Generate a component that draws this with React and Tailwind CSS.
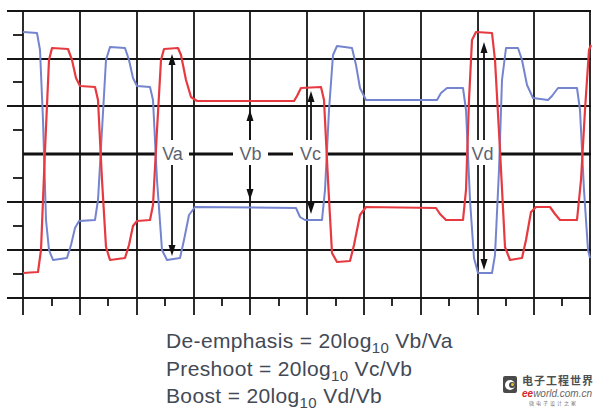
import React from 'react';

const FONT = { fontFamily: '"Liberation Sans", Arial, sans-serif' };
const CJK = { fontFamily: '"Noto Sans CJK SC", sans-serif' };

const RED = [
  [23,273],[38,272],[41,250],[45,150],[49,60],[52,48],[68,49],[72,60],[76,78],[80,86],[95,87],
  [98,100],[102,180],[106,247],[110,260],[125,258],[129,245],[133,226],[137,221],[150,220],
  [153,205],[157,130],[161,60],[164,49],[178,48],[181,55],[186,80],[191,97],[197,101],[294,101],
  [297,96],[301,88],[321,87],[324,100],[328,180],[332,253],[337,262],[350,261],[354,245],[360,215],
  [366,207],[436,208],[440,214],[446,220],[463,220],[466,190],[469,100],[472,40],[476,32],[492,33],
  [495,60],[500,150],[505,247],[510,260],[522,258],[526,240],[531,212],[536,207],[550,207],[555,214],
  [560,220],[577,220],[581,180],[585,110],[589,50],[591,45],
];

const BLUE = [
  [23,32],[37,33],[40,50],[43,120],[46,220],[49,250],[53,260],[67,258],[71,245],[75,228],[79,221],
  [95,220],[98,200],[102,130],[106,60],[110,47],[125,48],[129,60],[133,78],[137,86],[150,87],
  [153,100],[157,180],[162,250],[167,260],[180,258],[184,240],[189,215],[195,207],[296,208],
  [300,217],[305,220],[322,220],[325,190],[329,110],[333,55],[337,46],[352,48],[356,65],[360,88],
  [366,100],[437,100],[441,93],[447,88],[463,88],[466,110],[470,200],[474,258],[478,273],[492,273],
  [495,255],[499,170],[502,80],[506,48],[518,48],[522,60],[527,85],[533,98],[548,100],[552,96],
  [558,88],[577,88],[580,110],[584,190],[588,250],[590,258],
];

const ROWS = [11, 59, 106, 202, 250, 298];
const COLS = [23, 80, 137, 194, 250, 307, 364, 421, 478, 534, 590];
const Y_TICKS = [35, 82, 130, 178, 226, 274];
const X_TICKS = [52, 108, 165, 222, 279, 336, 392, 449, 506, 562];

// label knock-outs on the centre line, with their arrows
const LABELS = [
  { t: 'Va', x: 172, l: 156, r: 189, top: 54, bot: 256 },
  { t: 'Vb', x: 250, l: 233, r: 268, top: 110, bot: 200 },
  { t: 'Vc', x: 311, l: 293, r: 328, top: 91, bot: 214 },
  { t: 'Vd', x: 484, l: 466, r: 499, top: 42, bot: 270 },
];

const pts = (a) => a.map((p) => p.join(',')).join(' ');

function Arrow({ x, top, bot }) {
  return (
    <g fill="#111" stroke="none">
      <rect x={x - 0.9} y={top + 4} width="1.8" height={bot - top - 8} />
      <polygon points={`${x},${top} ${x - 3.5},${top + 11} ${x + 3.5},${top + 11}`} />
      <polygon points={`${x},${bot} ${x - 3.5},${bot - 11} ${x + 3.5},${bot - 11}`} />
    </g>
  );
}

function Scope() {
  return (
    <svg width="600" height="318" viewBox="0 0 600 318" className="block">
      <g stroke="#151515" strokeWidth="1.8">
        {ROWS.map((y) => <line key={y} x1="7" y1={y} x2="591" y2={y} />)}
        {COLS.map((x) => <line key={x} x1={x} y1="10" x2={x} y2="315" />)}
        {Y_TICKS.map((y) => <line key={y} x1="13" y1={y} x2="23" y2={y} />)}
        {X_TICKS.map((x) => <line key={x} x1={x} y1="298" x2={x} y2="306" />)}
      </g>
      <line x1="23" y1="154" x2="591" y2="154" stroke="#111" strokeWidth="3.2" />
      {LABELS.map((l) => <Arrow key={l.t} {...l} />)}
      {LABELS.map((l) => (
        <rect key={l.t} x={l.l} y="140" width={l.r - l.l} height="25" fill="#fff" />
      ))}
      {LABELS.map((l) => (
        <text key={l.t} x={(l.l + l.r) / 2} y="160" textAnchor="middle" fontSize="18" fill="#5d6270" style={FONT}>
          {l.t}
        </text>
      ))}
      <polyline points={pts(BLUE)} fill="none" stroke="#7484cf" strokeWidth="2" strokeLinejoin="round" />
      <polyline points={pts(RED)} fill="none" stroke="#e63a40" strokeWidth="2.2" strokeLinejoin="round" />
    </svg>
  );
}

const Sub = () => <sub className="text-[15px] bottom-[-5px]">10</sub>;

function Formulas() {
  return (
    <div className="pl-[166px] pt-[9px] text-[21px] leading-[27.5px] tracking-[0.35px] text-[#434955]" style={FONT}>
      <div>De-emphasis = 20log<Sub /> Vb/Va</div>
      <div>Preshoot = 20log<Sub /> Vc/Vb</div>
      <div>Boost = 20log<Sub /> Vd/Vb</div>
    </div>
  );
}

function Watermark() {
  return (
    <div className="absolute left-[503px] top-[372px] flex items-start gap-[5px]">
      <div className="w-[14px] h-[17px] bg-[#4a4a4a] rounded-[2px] flex items-center justify-center mt-[4px]">
        <div className="w-[10px] h-[10px] rounded-full bg-white flex items-center justify-end">
          <div className="w-[6px] h-[6px] rounded-full bg-[#4a4a4a] flex items-center justify-center">
            <div className="w-[3px] h-[3px] rounded-full bg-[#e8c23a]" />
          </div>
        </div>
      </div>
      <div className="flex flex-col">
        <div className="text-[11px] leading-[16px] font-bold tracking-[1px] text-[#505050]" style={CJK}>
          电子工程世界
        </div>
        <div className="text-[10px] leading-[11px] italic text-[#666]" style={FONT}>
          <span className="font-bold text-[#d8262c]">ee</span>world.com.cn
        </div>
        <div className="text-[5px] leading-[8px] pl-[7px] tracking-[2px] text-[#777]" style={CJK}>
          微电子设计之家
        </div>
      </div>
    </div>
  );
}

export default function App() {
  return (
    <div className="relative w-[600px] h-[412px] bg-white overflow-hidden">
      <Scope />
      <Formulas />
      <Watermark />
    </div>
  );
}
